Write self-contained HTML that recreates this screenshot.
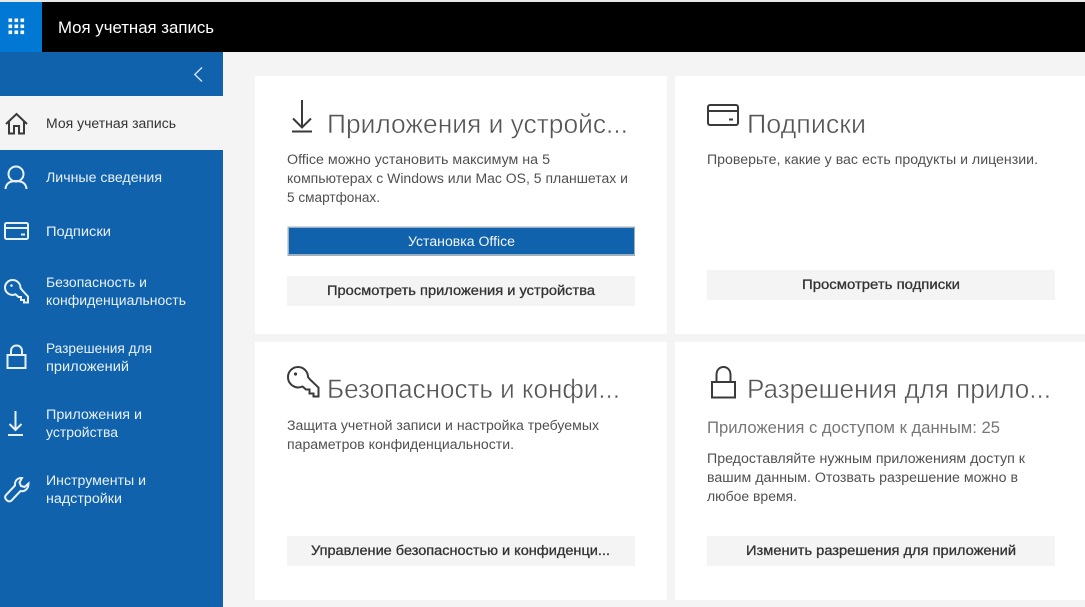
<!DOCTYPE html>
<html lang="ru">
<head>
<meta charset="utf-8">
<title>Моя учетная запись</title>
<style>
html,body{margin:0;padding:0;background:#f4f4f4;width:1085px;height:607px;overflow:hidden}
svg{display:block;filter:blur(.3px)}
text{font-family:"Liberation Sans",sans-serif;white-space:pre}
.nav{font-size:13.5px;fill:#e9f1f8}
.body{font-size:13.5px;fill:#505050}
.h{font-size:27px;fill:#555;stroke:#fff;stroke-width:.45px;paint-order:normal}
.btn{font-size:13.5px;fill:#333;stroke:#333;stroke-width:.3px}
.ic{fill:none;stroke:#e9f1f8;stroke-width:2}
.id{fill:none;stroke:#3a3a3a;stroke-width:2}
</style>
</head>
<body>
<svg width="1085" height="607" viewBox="0 0 1085 607" xmlns="http://www.w3.org/2000/svg">
<rect width="1085" height="607" fill="#f4f4f4"/>
<rect width="1085" height="2" fill="#e8e8e8"/>
<rect y="2" width="1085" height="50" fill="#000"/>
<rect y="2" width="42" height="50" fill="#0078d4"/>
<g fill="#fff">
<rect x="8.500" y="18.500" width="3.600" height="3.600"/><rect x="14.500" y="18.500" width="3.600" height="3.600"/><rect x="20.500" y="18.500" width="3.600" height="3.600"/>
<rect x="8.500" y="24.500" width="3.600" height="3.600"/><rect x="14.500" y="24.500" width="3.600" height="3.600"/><rect x="20.500" y="24.500" width="3.600" height="3.600"/>
<rect x="8.500" y="30.500" width="3.600" height="3.600"/><rect x="14.500" y="30.500" width="3.600" height="3.600"/><rect x="20.500" y="30.500" width="3.600" height="3.600"/>
</g>
<text x="58" y="33" font-size="16.500" fill="#fff" textLength="156" lengthAdjust="spacingAndGlyphs">Моя учетная запись</text>

<rect y="52" width="223" height="555" fill="#0f62ab"/>
<path d="M202 67.500 L194.800 74.500 L202 81.500" fill="none" stroke="#d6e5f2" stroke-width="1.400"/>
<rect y="96" width="223" height="54" fill="#f4f4f4"/>

<path class="id" stroke-width="1.700" d="M6 124 L16.500 114 L27 124 M9 121.500 V133.500 H14 V126 H19 V133.500 H24 V121.500"/>
<text x="46" y="128" class="nav" style="fill:#333" textLength="130" lengthAdjust="spacingAndGlyphs">Моя учетная запись</text>

<circle class="ic" cx="16" cy="174" r="7.500"/>
<path class="ic" d="M5.500 189 C6 183 10 181 16 181 C22 181 26 183 26.500 189"/>
<text x="46" y="182" class="nav" textLength="116" lengthAdjust="spacingAndGlyphs">Личные сведения</text>

<rect class="ic" x="5" y="223" width="23" height="16" rx="1.500"/>
<path class="ic" d="M5 228 H28 M21 234.500 H25"/>
<text x="46" y="236" class="nav" textLength="65" lengthAdjust="spacingAndGlyphs">Подписки</text>

<path class="ic" d="M12.500 280 C17 280 20.500 283.500 20.500 288 L22 290 L28 296.500 V302.500 H24 V300 H21 V297 H18.500 L15.500 294.300 C10 296.500 5 292.500 5 287.500 C5 283.500 8.500 280 12.500 280 Z"/>
<circle cx="11.500" cy="285.500" r="1.300" fill="#e9f1f8"/>
<text x="46" y="287" class="nav" textLength="101" lengthAdjust="spacingAndGlyphs">Безопасность и</text>
<text x="46" y="305" class="nav" textLength="140" lengthAdjust="spacingAndGlyphs">конфиденциальность</text>

<rect class="ic" x="7.500" y="355" width="18" height="13"/>
<path class="ic" d="M11 355 V351 C11 347.500 13.500 345.500 16.500 345.500 C19.500 345.500 22 347.500 22 351 V355"/>
<text x="46" y="353" class="nav" textLength="106" lengthAdjust="spacingAndGlyphs">Разрешения для</text>
<text x="46" y="371" class="nav" textLength="83" lengthAdjust="spacingAndGlyphs">приложений</text>

<path class="ic" stroke-width="1.700" d="M15.500 411 V430 M9.500 424 L15.500 430 L21.500 424 M8 435 H23"/>
<text x="46" y="419" class="nav" textLength="96" lengthAdjust="spacingAndGlyphs">Приложения и</text>
<text x="46" y="437" class="nav" textLength="72" lengthAdjust="spacingAndGlyphs">устройства</text>

<path class="ic" d="M22 478 C17.500 477.500 14.500 481 15 485.500 L6 495 C4.500 496.800 5 498.500 6.500 500 C8 501.500 10 502 11.500 500.500 L20.500 491 C25 492 28.500 488.500 28.500 483.500 L24.500 487 L21 486 L19.500 482.500 Z"/>
<text x="46" y="485" class="nav" textLength="100" lengthAdjust="spacingAndGlyphs">Инструменты и</text>
<text x="46" y="503" class="nav" textLength="76" lengthAdjust="spacingAndGlyphs">надстройки</text>

<rect x="255" y="76" width="412" height="258" fill="#fff"/>
<rect x="675" y="76" width="410" height="258" fill="#fff"/>
<rect x="255" y="342" width="412" height="258" fill="#fff"/>
<rect x="675" y="342" width="410" height="258" fill="#fff"/>

<path class="id" d="M302 100 V127 M293 118.500 L302 127.500 L311 118.500 M292 131.500 H312"/>
<text x="327" y="133" class="h" textLength="301" lengthAdjust="spacingAndGlyphs">Приложения и устройс...</text>
<text x="287" y="164" class="body" textLength="263" lengthAdjust="spacingAndGlyphs">Office можно установить максимум на 5</text>
<text x="287" y="183" class="body" textLength="341" lengthAdjust="spacingAndGlyphs">компьютерах с Windows или Mac OS, 5 планшетах и</text>
<text x="287" y="202" class="body" textLength="93" lengthAdjust="spacingAndGlyphs">5 смартфонах.</text>
<rect x="287.500" y="226.500" width="347.500" height="29.500" fill="#9db0c0"/>
<rect x="289" y="228" width="345" height="26" fill="#0f62ab"/>
<text x="408" y="246" font-size="13.500" fill="#f2f6fa" textLength="107" lengthAdjust="spacingAndGlyphs">Установка Office</text>
<rect x="287" y="276" width="348" height="30" fill="#f4f4f4"/>
<text x="327" y="295" class="btn" textLength="268" lengthAdjust="spacingAndGlyphs">Просмотреть приложения и устройства</text>

<rect class="id" x="708" y="105" width="30" height="20" rx="2"/>
<path class="id" d="M708 111 H738 M729 119.500 H733"/>
<text x="747" y="133" class="h" textLength="119" lengthAdjust="spacingAndGlyphs">Подписки</text>
<text x="707" y="164" class="body" textLength="331" lengthAdjust="spacingAndGlyphs">Проверьте, какие у вас есть продукты и лицензии.</text>
<rect x="707" y="270" width="348" height="30" fill="#f4f4f4"/>
<text x="802" y="289" class="btn" textLength="158" lengthAdjust="spacingAndGlyphs">Просмотреть подписки</text>

<path class="id" d="M298 367 C303.500 367 308 371.500 308 377 L310 379.500 L318.500 387.500 V396.500 H313.500 V393.500 H309.500 V389.500 H306 L302.500 386.500 C295.500 389.500 288 384.500 288 377 C288 371.500 292.500 367 298 367 Z"/>
<circle cx="295.500" cy="374" r="1.600" fill="#3a3a3a"/>
<text x="327" y="398" class="h" textLength="293" lengthAdjust="spacingAndGlyphs">Безопасность и конфи...</text>
<text x="287" y="430" class="body" textLength="312" lengthAdjust="spacingAndGlyphs">Защита учетной записи и настройка требуемых</text>
<text x="287" y="449" class="body" textLength="227" lengthAdjust="spacingAndGlyphs">параметров конфиденциальности.</text>
<rect x="287" y="536" width="348" height="30" fill="#f4f4f4"/>
<text x="311" y="555" class="btn" textLength="299" lengthAdjust="spacingAndGlyphs">Управление безопасностью и конфиденци...</text>

<rect class="id" x="712" y="382" width="23" height="15.500"/>
<path class="id" d="M716.500 382 V375 C716.500 370 719.500 367 723.500 367 C727.500 367 730.500 370 730.500 375 V382"/>
<text x="747" y="398" class="h" textLength="304" lengthAdjust="spacingAndGlyphs">Разрешения для прило...</text>
<text x="707" y="433" font-size="16.500" fill="#777" textLength="293" lengthAdjust="spacingAndGlyphs">Приложения с доступом к данным: 25</text>
<text x="707" y="463" class="body" textLength="318" lengthAdjust="spacingAndGlyphs">Предоставляйте нужным приложениям доступ к</text>
<text x="707" y="482" class="body" textLength="311" lengthAdjust="spacingAndGlyphs">вашим данным. Отозвать разрешение можно в</text>
<text x="707" y="501" class="body" textLength="90" lengthAdjust="spacingAndGlyphs">любое время.</text>
<rect x="707" y="536" width="348" height="30" fill="#f4f4f4"/>
<text x="746" y="555" class="btn" textLength="270" lengthAdjust="spacingAndGlyphs">Изменить разрешения для приложений</text>
</svg>
</body>
</html>
